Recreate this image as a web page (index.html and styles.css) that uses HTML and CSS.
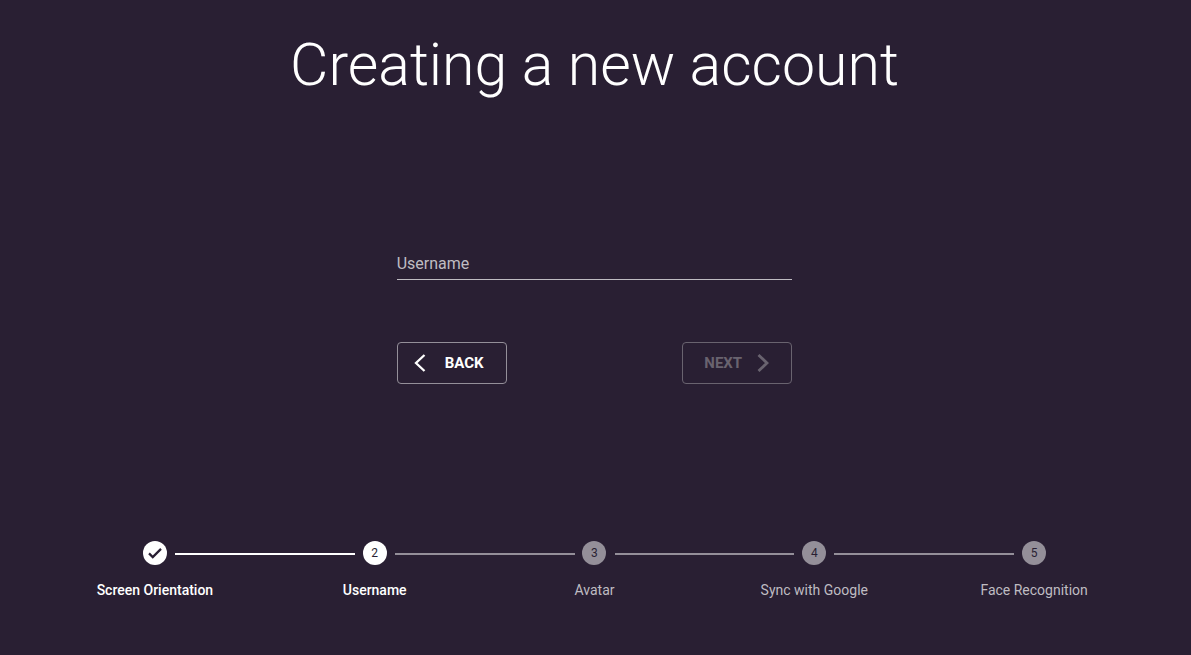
FILE: index.html
```html
<!DOCTYPE html>
<html lang="en">
<head>
<meta charset="utf-8">
<title>Creating a new account</title>
<link rel="stylesheet" href="styles.css">
</head>
<body>
<main class="page">
  <h1 class="title">Creating a new account</h1>
  <form class="form">
    <div class="field">
      <label class="field-label" for="username">Username</label>
      <input class="field-input" id="username" type="text">
    </div>
    <div class="actions">
      <button class="btn" type="button">
        <svg class="chevron" viewBox="0 0 12 18" aria-hidden="true"><path d="M10.500 1 2 9l8.500 8" stroke-width="2.300"/></svg>
        Back
      </button>
      <button class="btn btn-next" type="button" disabled>
        Next
        <svg class="chevron" viewBox="0 0 12 18" aria-hidden="true"><path d="M1.500 1 10 9l-8.500 8" stroke-width="2.800"/></svg>
      </button>
    </div>
  </form>
  <ol class="stepper">
    <li class="step done">
      <span class="dot"><svg class="check" viewBox="0 0 24 24" aria-hidden="true"><path d="M4 12.500 9 17.500 20 6.500"/></svg></span>
      <span class="label">Screen Orientation</span>
    </li>
    <li class="step active"><span class="dot">2</span><span class="label">Username</span></li>
    <li class="step"><span class="dot">3</span><span class="label">Avatar</span></li>
    <li class="step"><span class="dot">4</span><span class="label">Sync with Google</span></li>
    <li class="step"><span class="dot">5</span><span class="label">Face Recognition</span></li>
  </ol>
</main>
</body>
</html>
```

FILE: styles.css
```css
* { box-sizing: border-box; }

body {
  margin: 0;
  background: #291f33;
  color: #fff;
  font-family: Roboto, "Liberation Sans", sans-serif;
}

.page {
  min-height: 100vh;
  padding: 29px 47px 55px 45px;
  display: flex;
  flex-direction: column;
  justify-content: space-between;
  align-items: center;
}

.title {
  margin: 0;
  font-size: 59px;
  font-weight: 300;
  line-height: 72px;
  text-align: center;
}

.form {
  width: 36%;
  min-width: 260px;
  margin-bottom: 11px;
}

.field {
  display: grid;
}

.field-label,
.field-input {
  grid-area: 1 / 1;
  font: 400 16px/20px Roboto, "Liberation Sans", sans-serif;
}

.field-label {
  padding-top: 6px;
  color: #bfbcc2;
}

.field-input {
  width: 100%;
  height: 32px;
  padding: 0;
  border: 0;
  border-bottom: 1px solid #bfbcc2;
  border-radius: 0;
  outline: 0;
  background: transparent;
  color: #fff;
}

.field:focus-within .field-label { visibility: hidden; }

.actions {
  display: flex;
  justify-content: space-between;
  margin-top: 62px;
}

.btn {
  display: flex;
  align-items: center;
  gap: 19px;
  width: 110px;
  height: 42px;
  padding: 0 0 0 16px;
  border: 1px solid #948f99;
  border-radius: 4px;
  background: transparent;
  color: #fff;
  font: 700 15px/24px Roboto, "Liberation Sans", sans-serif;
  text-transform: uppercase;
}

.btn-next {
  gap: 15px;
  padding: 0 0 0 21px;
  border-color: #69636f;
  color: #69636f;
}

.chevron {
  width: 12px;
  height: 18px;
  fill: none;
  stroke: currentColor;
}

.stepper {
  display: flex;
  width: 100%;
  margin: 0;
  padding: 0;
  list-style: none;
}

.step {
  position: relative;
  flex: 1;
  display: flex;
  flex-direction: column;
  align-items: center;
  gap: 15px;
  color: #bfbcc2;
}

.step + .step::before {
  content: "";
  position: absolute;
  top: 12px;
  left: calc(-50% + 20px);
  right: calc(50% + 20px);
  height: 2px;
  background: #948f99;
}

.done + .step.active::before { background: #fff; }

.dot {
  display: flex;
  align-items: center;
  justify-content: center;
  width: 24px;
  height: 24px;
  border-radius: 50%;
  background: #948f99;
  color: #291f33;
  font-size: 12px;
}

.done, .active { color: #fff; }
.done .dot, .active .dot { background: #fff; }

.check {
  width: 18px;
  height: 18px;
  fill: none;
  stroke: #291f33;
  stroke-width: 3;
}

.label {
  font-size: 14px;
  line-height: 20px;
}

.done .label, .active .label { font-weight: 500; }
```
